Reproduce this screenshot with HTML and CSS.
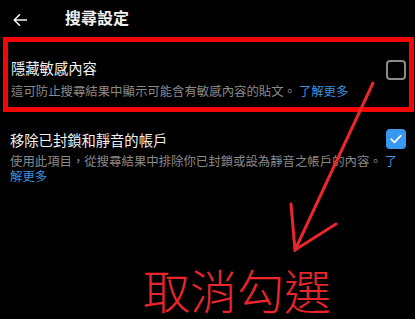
FILE: index.html
```html
<!DOCTYPE html>
<html lang="zh-Hant">
<head>
<meta charset="utf-8">
<title>搜尋設定</title>
<link rel="stylesheet" href="styles.css">
</head>
<body>
<header class="topbar">
  <svg class="back" width="14" height="12" viewBox="0 0 14 12" aria-hidden="true">
    <path d="M13.5 6H1.2M6.5 0.8L1.2 6l5.3 5.2" fill="none" stroke="#f2f2f2" stroke-width="1.6" stroke-linecap="round" stroke-linejoin="round"/>
  </svg>
  <h1 class="title">搜尋設定</h1>
</header>

<section class="row row--boxed">
  <div class="row-head">
    <span class="row-title">隱藏敏感內容</span>
    <span class="checkbox"></span>
  </div>
  <p class="row-desc">這可防止搜尋結果中顯示可能含有敏感內容的貼文。 <a class="link">了解更多</a></p>
</section>

<section class="row row--plain">
  <div class="row-head">
    <span class="row-title">移除已封鎖和靜音的帳戶</span>
    <span class="checkbox checkbox--on">
      <svg width="12" height="10" viewBox="0 0 12 10" aria-hidden="true"><path d="M1.2 5.2l3.3 3.2L10.8 1.6" fill="none" stroke="#fff" stroke-width="1.7" stroke-linecap="round" stroke-linejoin="round"/></svg>
    </span>
  </div>
  <p class="row-desc">使用此項目，從搜尋結果中排除你已封鎖或設為靜音之帳戶的內容。 <a class="link">了解更多</a></p>
</section>

<p class="note">取消勾選</p>

<svg class="annotation" width="415" height="319" viewBox="0 0 415 319" aria-hidden="true">
  <g fill="none" stroke="#e8262b" stroke-width="3" stroke-linecap="round">
    <path d="M373 83L295 250"/>
    <path d="M291 204L295 250L336 224"/>
  </g>
</svg>
</body>
</html>
```

FILE: styles.css
```css
* { box-sizing: border-box; }

html, body {
  margin: 0;
  padding: 0;
  background: #000;
}

body {
  position: relative;
  width: 415px;
  font-family: "Noto Sans CJK TC", "Noto Sans", sans-serif;
  color: #f0f0f0;
}

.topbar {
  height: 37px;
  display: flex;
  align-items: center;
  padding-left: 13px;
}

.back {
  display: block;
  margin-top: 2px;
}

.title {
  margin: 0 0 3px 38px;
  font-size: 16px;
  font-weight: 700;
  line-height: 20px;
  color: #f2f2f2;
}

.row-head {
  display: flex;
  align-items: center;
  justify-content: space-between;
  height: 20px;
}

.row-title {
  font-size: 14.3px;
  line-height: 20px;
  color: #f0f0f0;
}

.checkbox {
  width: 20px;
  height: 20px;
  border: 2px solid #8b8b8b;
  border-radius: 4px;
  display: flex;
  align-items: center;
  justify-content: center;
}

.checkbox--on {
  background: #3897f0;
  border-color: #3897f0;
}

.row-desc {
  margin: 0;
  font-size: 12.4px;
  line-height: 15px;
  color: #8a8a8a;
}

.link {
  color: #3b8fdc;
  text-decoration: none;
}

.row--boxed {
  margin: 0 1px 0 3px;
  border: 5px solid #f40606;
  padding: 16px 3px 8px 3px;
}

.row--boxed .checkbox {
  margin-top: 3px;
}

.row--boxed .row-desc {
  margin-top: 6px;
}

.row--plain {
  padding: 18px 9px 0 10px;
}

.row--plain .checkbox {
  margin-top: -2px;
}

.row--plain .row-desc {
  margin-top: 3.5px;
}

.note {
  margin: 78px 0 0 143px;
  font-size: 47px;
  font-weight: 300;
  line-height: 54px;
  color: #e8262b;
}

.annotation {
  position: absolute;
  left: 0;
  top: 0;
  pointer-events: none;
}
```
